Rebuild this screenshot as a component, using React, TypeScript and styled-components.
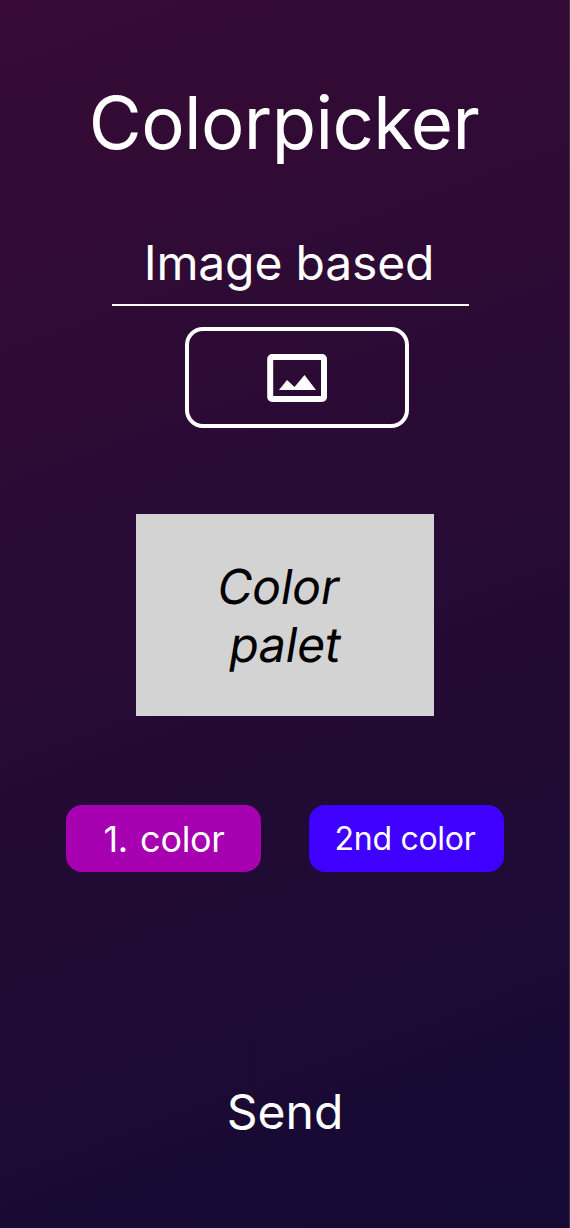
import React from 'react';
import styled, { createGlobalStyle } from 'styled-components';

const GlobalStyle = createGlobalStyle`
  *, *::before, *::after { box-sizing: border-box; }
  body { margin: 0; background: #241942; }
`;

const Screen = styled.main`
  width: 570px;
  height: 1228px;
  display: flex;
  flex-direction: column;
  align-items: center;
  overflow: hidden;
  color: #fff;
  font-family: Inter, sans-serif;
  background: linear-gradient(160deg, #370b35 0%, #140a34 100%);
  border-right: 1px solid #3a3544;
`;

const Title = styled.h1`
  margin: 79px 0 0;
  padding-right: 1px;
  font-size: 72.5px;
  line-height: 88px;
  font-weight: 400;
  letter-spacing: -0.6px;
  white-space: nowrap;
`;

const SectionTitle = styled.h2`
  width: 357px;
  margin: 66px 0 0 12px;
  padding: 0 3px 11px 0;
  border-bottom: 2px solid #fff;
  text-align: center;
  font-size: 48px;
  line-height: 60px;
  font-weight: 400;
  letter-spacing: -0.15px;
`;

const ImageButton = styled.button`
  width: 224px;
  height: 101px;
  margin: 21px 0 0 25px;
  padding: 0;
  display: flex;
  align-items: center;
  justify-content: center;
  color: inherit;
  background: transparent;
  border: 4px solid #fff;
  border-radius: 18px;
`;

const Palette = styled.section`
  width: 298px;
  height: 202px;
  margin: 85.5px 0 0;
  padding-top: 44px;
  display: flex;
  flex-direction: column;
  align-items: center;
  background: #d3d3d3;
  color: #000;
`;

const PaletteLine = styled.span<{ $before?: number; $after?: number }>`
  padding: 0 ${({ $after = 0 }) => $after}px 0 ${({ $before = 0 }) => $before}px;
  font-size: 48px;
  line-height: 58px;
  font-weight: 400;
  letter-spacing: -0.2px;
  transform: skewX(-9.4deg);
`;

const Choices = styled.div`
  display: flex;
  gap: 48px;
  margin: 89.5px 0 0 1px;
`;

const ColorButton = styled.button<{ $color: string; $size: number; $before?: number; $after?: number; $wordGap?: number }>`
  width: 195px;
  height: 67px;
  padding: 0 ${({ $after = 0 }) => $after}px 0 ${({ $before = 0 }) => $before}px;
  border: 0;
  border-radius: 16px;
  background: ${({ $color }) => $color};
  color: #fff;
  font: 400 ${({ $size }) => $size}px Inter, sans-serif;
  font-kerning: none;
  letter-spacing: -0.3px;
  word-spacing: ${({ $wordGap = 0 }) => $wordGap}px;
`;

const SendButton = styled.button`
  margin: 210px 0 0 1px;
  padding: 0;
  border: 0;
  background: none;
  color: #fff;
  font: 400 48px/60px Inter, sans-serif;
`;

export default function App() {
  return (
    <>
      <GlobalStyle />
      <Screen>
        <Title>Colorpicker</Title>
        <SectionTitle>Image based</SectionTitle>
        <ImageButton aria-label="Choose image">
          <svg width="60" height="48" viewBox="0 0 60 48" fill="none">
            <rect x="3.2" y="3" width="53.8" height="42" rx="2" stroke="currentColor" strokeWidth="6" />
            <path d="M12 36L20 26L27.5 33L37.5 21L49 36Z" fill="currentColor" />
          </svg>
        </ImageButton>
        <Palette>
          <PaletteLine $after={11}>Color</PaletteLine>
          <PaletteLine $before={2}>palet</PaletteLine>
        </Palette>
        <Choices>
          <ColorButton $color="#a600b0" $size={36} $before={1} $wordGap={2.5}>1. color</ColorButton>
          <ColorButton $color="#4000ff" $size={32} $after={3}>2nd color</ColorButton>
        </Choices>
        <SendButton>Send</SendButton>
      </Screen>
    </>
  );
}
